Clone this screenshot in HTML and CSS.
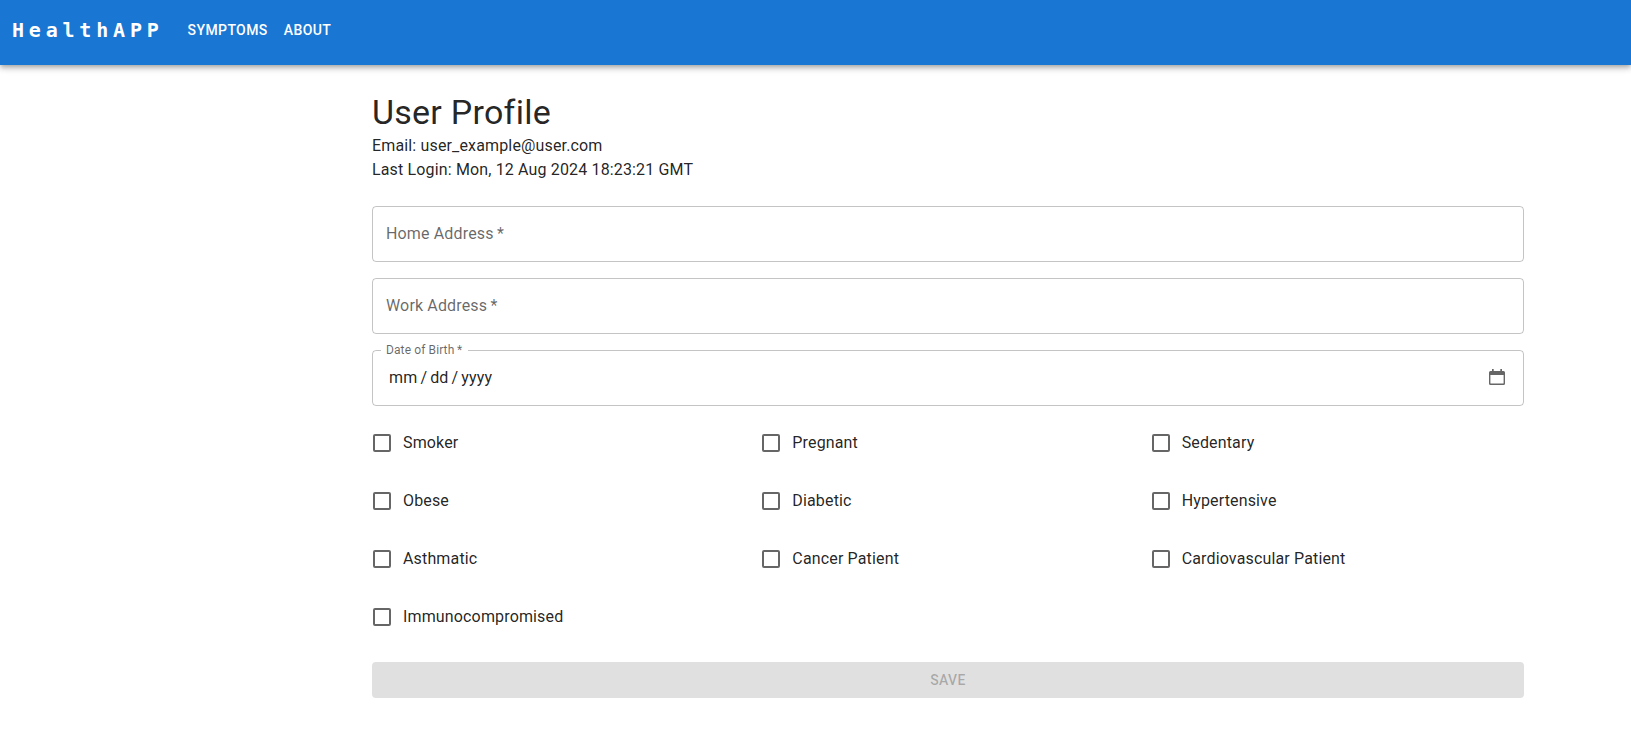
FILE: index.html
```
<!DOCTYPE html>
<html lang="en">
<head>
<meta charset="utf-8">
<title>HealthAPP</title>
<link rel="stylesheet" href="styles.css">
</head>
<body>
<header class="bar">
  <a class="brand">HealthAPP</a>
  <nav class="nav"><a>SYMPTOMS</a><a>ABOUT</a></nav>
</header>
<main class="profile">
  <h1 class="title">User Profile</h1>
  <p class="meta">Email: user_example@user.com</p>
  <p class="meta">Last Login: Mon, 12 Aug 2024 18:23:21 GMT</p>
  <form class="form">
    <div class="field"><label class="placeholder">Home Address&thinsp;*</label></div>
    <div class="field"><label class="placeholder">Work Address&thinsp;*</label></div>
    <div class="field date">
      <label class="floating">Date of Birth&thinsp;*</label>
      <span class="parts"><span>mm</span><span>/</span><span>dd</span><span>/</span><span>yyyy</span></span>
      <svg class="calendar" viewBox="0 0 16 16"><path fill-rule="evenodd" d="M3 0h1.700v2h6.600V0H13v2h1.500Q16 2 16 3.500v11q0 1.500-1.500 1.500h-13Q0 16 0 14.500v-11Q0 2 1.500 2H3zM1.400 6v8q0 .6.6.6h12q.6 0 .6-.6V6z"/></svg>
    </div>
    <div class="checks">
      <label class="check"><span class="box"></span>Smoker</label>
      <label class="check"><span class="box"></span>Pregnant</label>
      <label class="check"><span class="box"></span>Sedentary</label>
      <label class="check"><span class="box"></span>Obese</label>
      <label class="check"><span class="box"></span>Diabetic</label>
      <label class="check"><span class="box"></span>Hypertensive</label>
      <label class="check"><span class="box"></span>Asthmatic</label>
      <label class="check"><span class="box"></span>Cancer Patient</label>
      <label class="check"><span class="box"></span>Cardiovascular Patient</label>
      <label class="check"><span class="box"></span>Immunocompromised</label>
    </div>
    <button class="save" type="button" disabled>SAVE</button>
  </form>
</main>
</body>
</html>
```
FILE: styles.css
```
* { box-sizing: border-box; }
body { margin: 0; background: #fff; color: rgba(0,0,0,.87); font: 400 16px/24px Roboto, sans-serif; letter-spacing: .15px; }
.bar { height: 65px; padding: 0 12px 5px; display: flex; align-items: center; background: #1976d2; color: #fff; box-shadow: 0 2px 4px -1px rgba(0,0,0,.2), 0 4px 5px rgba(0,0,0,.14), 0 1px 10px rgba(0,0,0,.12); }
.brand { font: 700 20px/32px "DejaVu Sans Mono", monospace; letter-spacing: 4.8px; }
.nav { display: flex; gap: 16px; margin-left: 24px; font-size: 14px; font-weight: 500; letter-spacing: .4px; }
.profile { width: 1152px; margin: 26px 0 0 372px; }
.title { margin: 0 0 1px; font-size: 34px; line-height: 42px; font-weight: 400; letter-spacing: .25px; }
.meta { margin: 0; }
.form { margin-top: 24px; }
.field { height: 56px; margin-bottom: 16px; padding: 0 13px; display: flex; align-items: center; border: 1px solid rgba(0,0,0,.23); border-radius: 4px; }
.placeholder { color: rgba(0,0,0,.6); }
.date { position: relative; padding: 0 18px 0 16px; justify-content: space-between; }
.floating { position: absolute; left: 8px; top: -10px; padding: 0 6px 0 5px; background: #fff; color: rgba(0,0,0,.6); font-size: 12px; line-height: 18px; letter-spacing: .11px; }
.parts { display: flex; gap: 3px; }
.calendar { width: 16px; height: 16px; margin-bottom: 2px; fill: #666; }
.checks { display: grid; grid-template-columns: repeat(3, 1fr); gap: 16px; }
.check { height: 42px; padding-left: 1px; display: flex; align-items: center; gap: 12px; }
.box { width: 18px; height: 18px; border: 2px solid rgba(0,0,0,.6); border-radius: 2px; }
.save { display: block; width: 100%; height: 36px; margin-top: 24px; border: 0; border-radius: 4px; background: #e0e0e0; color: rgba(0,0,0,.26); font: 500 14px/24px Roboto, sans-serif; letter-spacing: .4px; }
```
